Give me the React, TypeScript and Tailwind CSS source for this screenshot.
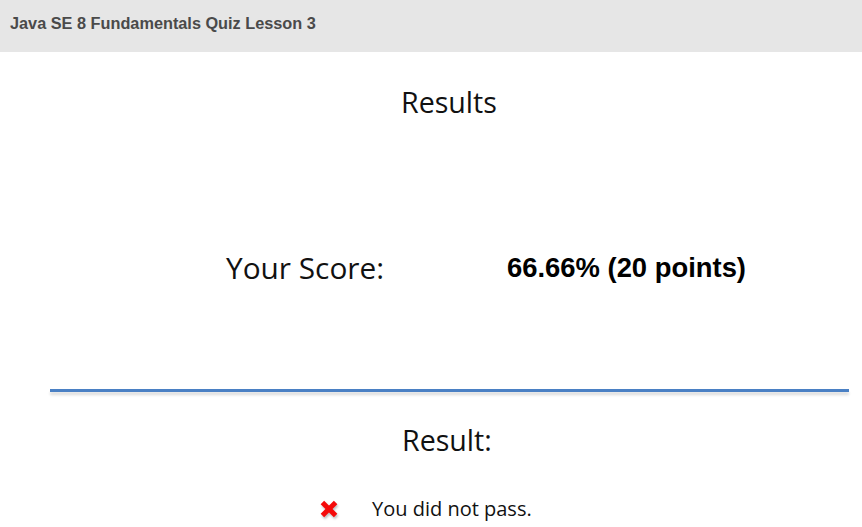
import React from 'react';

const XIcon = () => (
    <svg width="22" height="22" viewBox="0 0 20 20" className="drop-shadow-[1px_2px_1px_rgba(0,0,0,0.25)]">
        <path d="M4 4 L16 16 M16 4 L4 16" stroke="#f50a0a" strokeWidth="4.5" strokeLinecap="butt" />
    </svg>
);

export default function App() {
    return (
        <div className="w-[862px] h-[527px] bg-white overflow-hidden">
            {/* top bar */}
            <div className="h-[52px] bg-[#e6e6e6] flex items-center pl-[10px] pb-[5px]">
                <span className="font-['Liberation_Sans',Arial,sans-serif] font-bold text-[16.3px] text-[#4a4a4a]">
                    Java SE 8 Fundamentals Quiz Lesson 3
                </span>
            </div>

            <div className="font-['Open_Sans','Noto_Sans',sans-serif] text-[#111]">
                <div className="h-[40px] mt-[30px] pl-[401px] text-[28.6px] leading-[40px]">Results</div>

                {/* score row */}
                <div className="flex items-center mt-[126px] h-[40px]">
                    <div className="pl-[226px] w-[507px] text-[29.8px]">Your Score:</div>
                    <div className="font-['Liberation_Sans',Arial,sans-serif] font-bold text-[27.4px] text-black">
                        66.66% (20 points)
                    </div>
                </div>

                {/* divider */}
                <div className="mt-[101px] ml-[50px] w-[799px] h-[3px] bg-[#4a80c4] shadow-[0_3px_3px_rgba(0,0,0,0.15)]" />

                <div className="h-[40px] mt-[28px] pl-[402px] text-[28.6px] leading-[40px]">Result:</div>

                <div className="flex items-center mt-[34px] pl-[318px] h-[30px]">
                    <XIcon />
                    <span className="ml-[32px] text-[20px]">You did not pass.</span>
                </div>
            </div>
        </div>
    );
}
